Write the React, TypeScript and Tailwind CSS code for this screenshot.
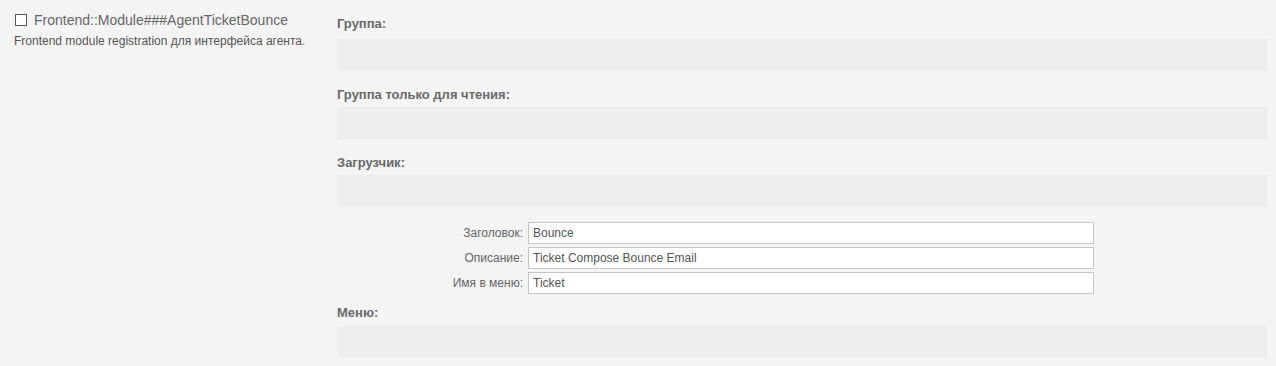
const FONT = { fontFamily: '"Liberation Sans", Arial, sans-serif' };

function Section({ label, first }: { label: string; first?: boolean }) {
  return (
    <div>
      <div
        className={
          "text-[13px] leading-4 font-bold text-[#6a6a6a] " +
          (first ? "pt-4 pb-[7px]" : "pt-4 pb-1")
        }
      >
        {label}
      </div>
      <div className="h-8 bg-[#ededed]" />
    </div>
  );
}

const FIELDS = [
  { label: "Заголовок:", value: "Bounce" },
  { label: "Описание:", value: "Ticket Compose Bounce Email" },
  { label: "Имя в меню:", value: "Ticket" },
];

export default function App() {
  return (
    <div className="min-h-[366px] w-[1276px] bg-[#f4f4f4] flex" style={FONT}>
      {/* left: setting name */}
      <div className="w-[337px] shrink-0 pl-[14px] pt-[12px]">
        <div className="flex items-center gap-[7px]">
          <span className="ml-[1px] w-[12px] h-[12px] border border-[#555] bg-white" />
          <span className="text-[14px] leading-4 text-[#666]">
            Frontend::Module###AgentTicketBounce
          </span>
        </div>
        <div className="mt-[5px] text-[12px] leading-4 text-[#555]">
          Frontend module registration для интерфейса агента.
        </div>
      </div>

      {/* right: values */}
      <div className="w-[930px] shrink-0">
        <Section label="Группа:" first />
        <Section label="Группа только для чтения:" />
        <Section label="Загрузчик:" />

        <div className="pt-[15px] flex flex-col gap-[3px]">
          {FIELDS.map((f) => (
            <div key={f.label} className="flex items-center">
              <label className="w-[191px] pr-[5px] text-right text-[12px] text-[#666]">
                {f.label}
              </label>
              <input
                readOnly
                value={f.value}
                className="w-[566px] h-[22px] border border-[#c4c4c4] bg-white px-[4px] text-[12px] text-[#555] outline-none"
                style={FONT}
              />
            </div>
          ))}
        </div>

        <div className="text-[13px] leading-4 font-bold text-[#6a6a6a] pt-[11px] pb-[5px]">
          Меню:
        </div>
        <div className="h-8 bg-[#ededed]" />
      </div>
    </div>
  );
}
